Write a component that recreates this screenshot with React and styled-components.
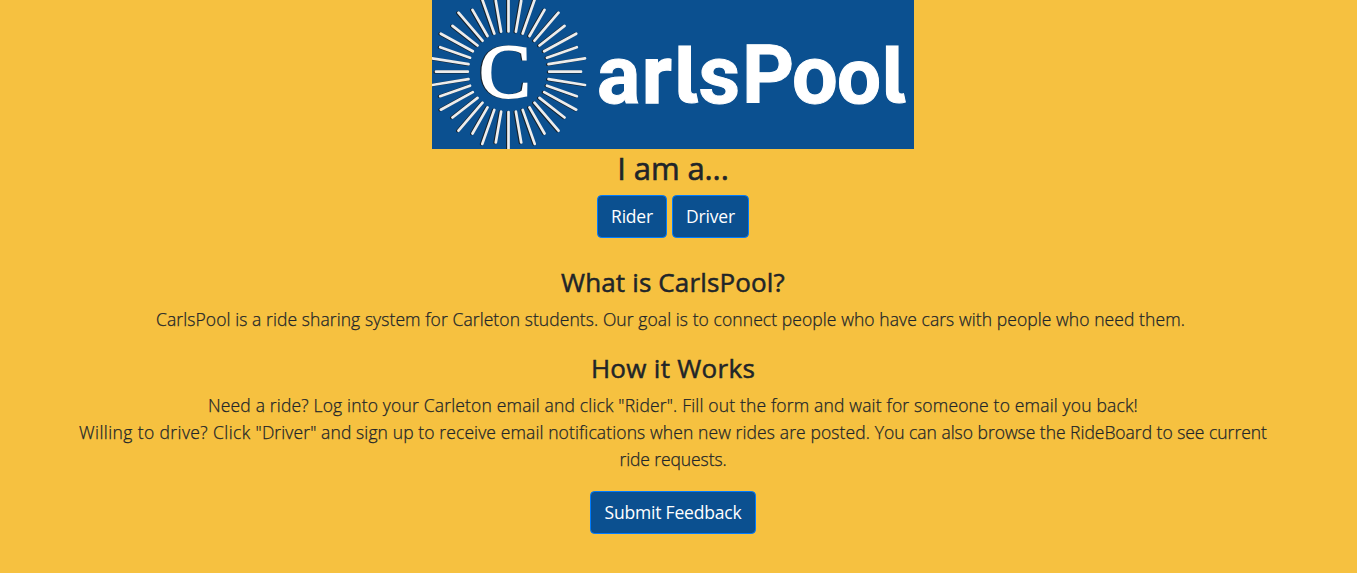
import React from "react";
import styled, { createGlobalStyle } from "styled-components";

const GlobalStyle = createGlobalStyle`
  *, *::before, *::after { box-sizing: border-box; }
  body {
    margin: 0;
    background: #f6c140;
    color: #212529;
    font-family: "Open Sans", "Segoe UI", sans-serif;
    font-size: 18px;
    line-height: 27px;
  }
`;

const Page = styled.main`
  display: flex;
  flex-direction: column;
  align-items: center;
  min-height: 573px;
  padding: 0 75px 0 64px;
  text-align: center;
`;

const Logo = styled.svg`
  display: block;
  flex: none;
  width: 482px;
  height: 149px;
  background: #0b5090;
`;

const TailedL = styled.tspan`
  font-family: Inter, sans-serif;
  font-size: 79px;
  font-feature-settings: "cv05" 1, "ss02" 1;
`;

const Title = styled.h1`
  margin: 0 0 7px;
  font-size: 31px;
  font-weight: 400;
  line-height: 39px;
  letter-spacing: -0.1px;
  -webkit-text-stroke: 0.6px currentColor;
`;

const Heading = styled.h2`
  margin: 0 0 8px;
  font-size: 26px;
  font-weight: 400;
  line-height: 32px;
  letter-spacing: ${(p) => p.$track || 0}px;
  -webkit-text-stroke: 0.5px currentColor;
`;

const Section = styled.section`
  margin-top: ${(p) => p.$top}px;
`;

const Line = styled.span`
  display: block;
  padding-right: ${(p) => p.$trail || 0}px;
  font-size: 17.5px;
  font-weight: 300;
  white-space: nowrap;
  letter-spacing: ${(p) => p.$track || 0}px;
  -webkit-text-stroke: 0.25px currentColor;
`;

const Tracked = styled.span`
  letter-spacing: ${(p) => p.$track}px;
`;

const Copy = styled.p`
  margin: 0;
`;

const Buttons = styled.div`
  display: flex;
  gap: 5px;
`;

const Button = styled.button`
  width: ${(p) => p.$width}px;
  height: 43px;
  margin-top: ${(p) => p.$top || 0}px;
  padding: 0;
  border: 1px solid #007bff;
  border-radius: 4.5px;
  background: #0b5090;
  color: #fff;
  font: 400 17.5px/27px "Open Sans", "Segoe UI", sans-serif;
  letter-spacing: -0.2px;
  white-space: nowrap;
`;

// Ray ends in one quadrant, relative to the centre of the sunburst
const QUADRANT = [
  [40, 7.5, 76.5, 13.3],
  [38.5, 14, 68.3, 24.5],
  [35.7, 20.4, 67.7, 38],
  [31, 26.2, 56, 45.8],
  [26, 31, 50, 59],
  [21, 35.7, 36, 61.8],
  [14.2, 38.2, 26.2, 72.2],
  [7.4, 40, 12.7, 70.8],
];

const RAYS = [
  [40.7, 0, 72.5, 0],
  [-40.7, 0, -72.5, 0],
  [0, -40.3, 0, -76],
  [0, 40.3, 0, 80],
  ...QUADRANT.flatMap(([a, b, c, d]) =>
    [[1, 1], [-1, 1], [1, -1], [-1, -1]].map(([x, y]) => [a * x, b * y, c * x, d * y])
  ),
];

const rays = RAYS.map(([a, b, c, d]) => `M${a} ${b}L${c} ${d}`).join("");

function CarlsPoolLogo() {
  return (
    <Logo viewBox="0 0 482 149" role="img" aria-label="CarlsPool">
      <g transform="translate(76.5 71.7)" fill="none" strokeLinecap="round">
        <path d={rays} stroke="#17222b" strokeWidth="3" transform="translate(-1 0.2)" />
        <path d={rays} stroke="#ededed" strokeWidth="2.7" />
      </g>
      <g fontFamily="Liberation Serif, serif" fontSize="77" strokeWidth="2">
        <text x="46" y="97" fill="#17222b" stroke="#17222b">C</text>
        <text x="47.3" y="96.7" fill="#fff" stroke="#fff">C</text>
      </g>
      <text
        y="102.7"
        fill="#fff"
        stroke="#fff"
        strokeWidth="1"
        fontFamily="Roboto, sans-serif"
        fontSize="81"
        fontWeight="700"
      >
        <tspan x="165">a</tspan>
        <tspan x="210" strokeWidth="1.6">r</tspan>
        <TailedL x="242">l</TailedL>
        <tspan x="266.5 310 360">sPo</tspan>
        <tspan x="405" fontSize="78">o</tspan>
        <TailedL x="449.5">l</TailedL>
      </text>
    </Logo>
  );
}

export default function App() {
  return (
    <>
      <GlobalStyle />
      <Page>
        <CarlsPoolLogo />
        <Title>I am a...</Title>
        <Buttons>
          <Button $width={70}>Rider</Button>
          <Button $width={77}>Driver</Button>
        </Buttons>
        <Section $top={28}>
          <Heading $track={0.15}>What is CarlsPool?</Heading>
          <Copy>
            <Line $trail={5} $track={0.08}>
              CarlsPool is a ride sharing system for Carleton students. Our goal is to connect people who have cars with people who need them.
            </Line>
          </Copy>
        </Section>
        <Section $top={19}>
          <Heading $track={0.3}>How it Works</Heading>
          <Copy>
            <Line $track={0.17}>
              Need a ride? Log into your Carleton email and click "Rider". Fill out the form and wait for someone to email you back!
            </Line>
            <Line $track={0.11}>
              <Tracked $track={0.4}>Willing to drive? Click </Tracked>
              "Driver" and sign up to receive email notifications when new rides are posted.{" "}
              <Tracked $track={-0.02}>You can also browse the RideBoard to see current</Tracked>
            </Line>
            <Line $track={-0.1}>ride requests.</Line>
          </Copy>
        </Section>
        <Button $width={166} $top={18}>Submit Feedback</Button>
      </Page>
    </>
  );
}
